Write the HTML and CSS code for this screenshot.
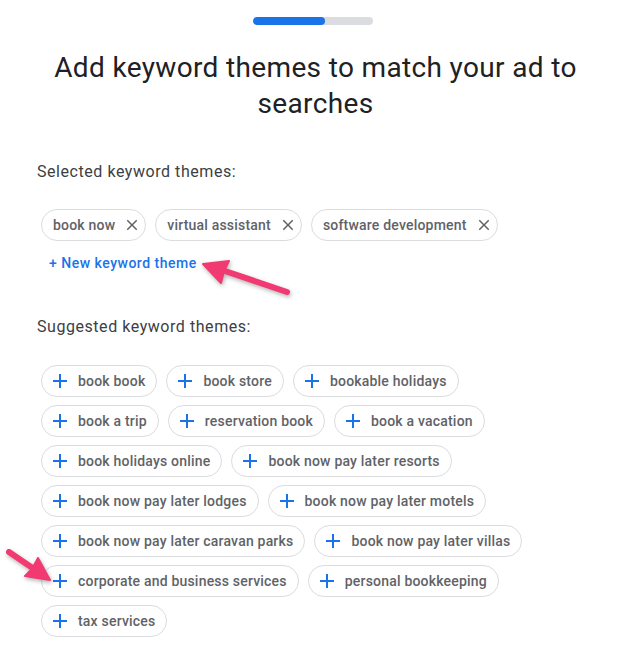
FILE: index.html
```html
<!DOCTYPE html>
<html lang="en">
<head>
<meta charset="UTF-8">
<meta name="viewport" content="width=device-width, initial-scale=1.0">
<title>Keyword themes</title>
<link rel="stylesheet" href="styles.css">
</head>
<body>
<div class="page">
<div class="progress"><div class="progress-fill" style="width: 60%;"></div></div>
<h1>Add keyword themes to match your ad to searches</h1>

<h2 class="section-label">Selected keyword themes:</h2>
<div class="chips selected">
<span class="chip">book now <svg class="close" viewBox="0 0 24 24"><path d="M19 6.41L17.59 5 12 10.59 6.41 5 5 6.41 10.59 12 5 17.59 6.41 19 12 13.41 17.59 19 19 17.59 13.41 12z"/></svg></span>
<span class="chip">virtual assistant <svg class="close" viewBox="0 0 24 24"><path d="M19 6.41L17.59 5 12 10.59 6.41 5 5 6.41 10.59 12 5 17.59 6.41 19 12 13.41 17.59 19 19 17.59 13.41 12z"/></svg></span>
<span class="chip">software development <svg class="close" viewBox="0 0 24 24"><path d="M19 6.41L17.59 5 12 10.59 6.41 5 5 6.41 10.59 12 5 17.59 6.41 19 12 13.41 17.59 19 19 17.59 13.41 12z"/></svg></span>
</div>
<a class="new-theme" href="#">+ New keyword theme</a>

<h2 class="section-label suggested-label">Suggested keyword themes:</h2>
<div class="chips suggested" id="suggested"></div>

<!-- annotation arrows -->
<svg class="arrows" width="631" height="646" viewBox="0 0 631 646">
<g class="arrow">
<line x1="287" y1="292" x2="222" y2="270"/>
<polygon points="203,264 229,261 224,271 221,283"/>
</g>
<g class="arrow">
<line x1="9" y1="552" x2="34" y2="569"/>
<polygon points="50,580 38,558 32,569 25,576"/>
</g>
</svg>
</div>

<script>
// Suggested themes, each with an add icon
const suggestions = [
'book book', 'book store', 'bookable holidays',
'book a trip', 'reservation book', 'book a vacation',
'book holidays online', 'book now pay later resorts',
'book now pay later lodges', 'book now pay later motels',
'book now pay later caravan parks', 'book now pay later villas',
'corporate and business services', 'personal bookkeeping',
'tax services'
];

const list = document.getElementById('suggested');
suggestions.forEach(function(text) {
const chip = document.createElement('span');
chip.className = 'chip';
chip.innerHTML = '<svg class="add" viewBox="0 0 24 24"><path d="M19 13h-6v6h-2v-6H5v-2h6V5h2v6h6v2z"/></svg>' + text;
list.appendChild(chip);
});
</script>
</body>
</html>
```

FILE: styles.css
```css
body {
margin: 0;
font-family: Roboto, "Noto Sans", Arial, sans-serif;
background: #fff;
}

.page {
position: relative;
width: 631px;
height: 646px;
padding: 17px 37px 0;
box-sizing: border-box;
overflow: hidden;
}

.progress {
width: 120px;
height: 8px;
margin-left: 216px;
background: #dadce0;
border-radius: 4px;
overflow: hidden;
}

.progress-fill {
height: 100%;
background: #1a73e8;
border-radius: 4px;
}

h1 {
margin: 25px 0 0;
font-size: 28px;
font-weight: 400;
line-height: 36px;
color: #202124;
text-align: center;
letter-spacing: 0.35px;
}

.section-label {
margin: 38px 0 0;
font-size: 16px;
font-weight: 400;
line-height: 24px;
color: #3c4043;
letter-spacing: 0.55px;
}

.suggested-label {
margin-top: 42px;
}

.chips {
display: flex;
flex-wrap: wrap;
gap: 8px 9px;
margin: 25px 0 0 4px;
width: 520px;
}

.suggested {
margin-top: 26px;
}

.chip {
display: inline-flex;
align-items: center;
height: 32px;
box-sizing: border-box;
border: 1px solid #dadce0;
border-radius: 16px;
font-size: 14px;
font-weight: 500;
color: #5f6368;
letter-spacing: 0.2px;
white-space: nowrap;
}

.selected .chip {
padding: 0 4px 0 11px;
}

.suggested .chip {
padding: 0 11px 0 6px;
}

.close {
width: 18px;
height: 18px;
margin-left: 8px;
fill: #5f6368;
}

.add {
width: 24px;
height: 24px;
margin-right: 6px;
fill: #1a73e8;
}

.new-theme {
display: block;
margin: 12px 0 0 12px;
font-size: 14px;
font-weight: 500;
line-height: 20px;
color: #1a73e8;
text-decoration: none;
letter-spacing: 0.5px;
}

.arrows {
position: absolute;
top: 0;
left: 0;
pointer-events: none;
}

.arrow {
filter: drop-shadow(1px 2px 2px rgba(0, 0, 0, 0.3));
}

.arrow line {
stroke: #f23a72;
stroke-width: 6;
stroke-linecap: round;
}

.arrow polygon {
fill: #f23a72;
stroke: #f23a72;
stroke-width: 2;
stroke-linejoin: round;
}
```
